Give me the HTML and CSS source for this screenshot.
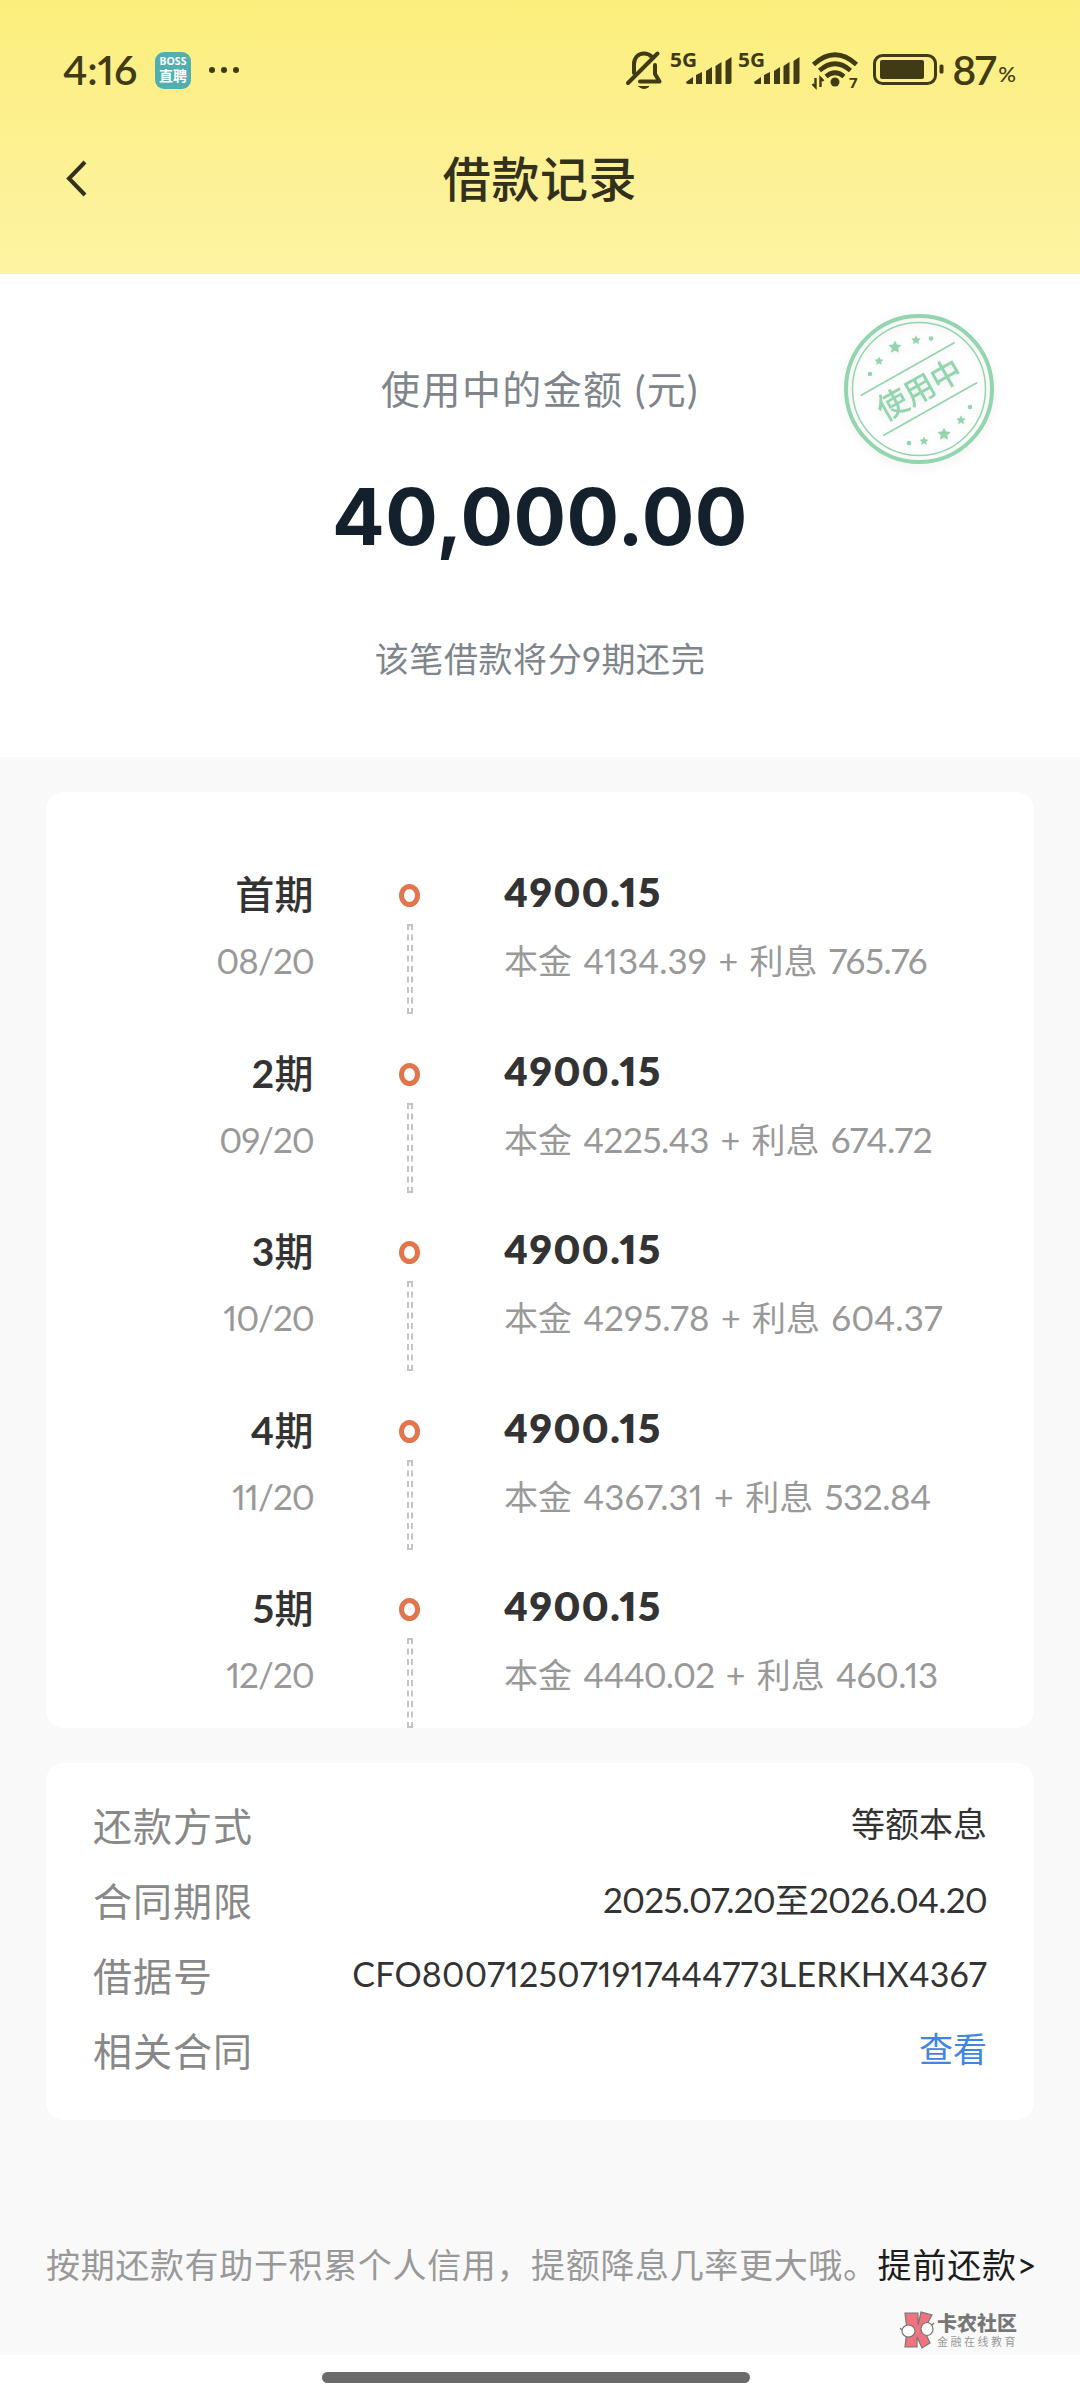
FILE: index.html
```html
<!DOCTYPE html>
<html lang="zh-CN">
<head>
<meta charset="utf-8">
<title>借款记录</title>
<link rel="stylesheet" href="styles.css">
</head>
<body>
<header class="top">
  <div class="status">
    <span class="clock">4:16</span>
    <span class="boss"><span class="boss-en">BOSS</span><span class="boss-cn">直聘</span></span>
    <svg class="more" width="32" height="8" viewBox="0 0 32 8"><circle cx="4" cy="4" r="3"/><circle cx="16" cy="4" r="3"/><circle cx="28" cy="4" r="3"/></svg>
    <div class="status-right">
      <svg class="bell" width="36" height="40" viewBox="0 0 36 40" stroke="#403b14" stroke-width="4" stroke-linecap="round" stroke-linejoin="round"><path d="M8 23V14C8 8 12 3.500 18 3.500c3 0 5.500 1 7.500 3M29 15v9l4.500 7.500H14M31.500 3.500L2 33" fill="none"/><path d="M13 36.500h10q-5 4-10 0z" stroke-width="1"/></svg>
      <svg class="sig" width="62" height="40" viewBox="0 0 62 40"><text x="0" y="17" textLength="27" lengthAdjust="spacingAndGlyphs">5G</text><path d="M16 32l7-5v7h-5q-2 0-2-2zM26 25l6-3v12h-6zM36 21l6-4v17h-6zM45.500 16l6-4v22h-6zM55.500 11l6-4v25q0 2-2 2h-4z"/></svg>
      <svg class="sig sig2" width="62" height="40" viewBox="0 0 62 40"><text x="0" y="17" textLength="27" lengthAdjust="spacingAndGlyphs">5G</text><path d="M16 32l7-5v7h-5q-2 0-2-2zM26 25l6-3v12h-6zM36 21l6-4v17h-6zM45.500 16l6-4v22h-6zM55.500 11l6-4v25q0 2-2 2h-4z"/></svg>
      <svg class="wifi" width="46" height="40" viewBox="0 0 46 40"><g stroke="#403b14" stroke-width="4.600"><path d="M1.500 14.500Q23-5 44.500 14.500M7.500 20.500Q23 7 38.500 20.500M14 26.500Q23 19 32 26.500"/><path d="M3.500 28v9l-3-3M8.500 37v-9l3 3" stroke-width="2.400"/></g><circle cx="23" cy="32" r="4.500"/><text x="37" y="38">7</text></svg>
      <svg class="bat" width="71" height="40" viewBox="0 0 71 40"><rect class="shell" x="1.500" y="5.500" width="61" height="28" rx="8" stroke="#403b14" stroke-width="3"/><rect x="7" y="10" width="44" height="19" rx="2"/><rect x="66.500" y="14.500" width="4" height="9" rx="1.500"/></svg>
      <span class="pct">87</span><span class="pct-sign">%</span>
    </div>
  </div>
  <div class="nav">
    <svg class="back" width="22" height="38" viewBox="0 0 22 38"><path d="M19 2L3 18.500L19 35" fill="none" stroke="#33301c" stroke-width="4"/></svg>
    <h1>借款记录</h1>
  </div>
</header>

<section class="summary">
  <p class="label">使用中的金额 (元)</p>
  <p class="total">40,000.00</p>
  <p class="note">该笔借款将分9期还完</p>
  <svg class="stamp" width="160" height="160" viewBox="-80 -80 160 160">
    <defs><path id="star" d="M0-6L1.800-2.200L6-1.800L2.900 1.100L3.700 5.200L0 3.100L-3.700 5.200L-2.900 1.100L-6-1.800L-1.800-2.200Z"/></defs>
    <g fill="none" stroke="#92d5ae"><circle r="73" stroke-width="4"/><circle r="66.500" stroke-width="1.500"/></g>
    <g transform="rotate(-29.500)" fill="#92d5ae">
      <path d="M-54-23H54M-54 23H54" stroke="#92d5ae" stroke-width="1.700"/>
      <text x="-46" y="12" textLength="92">使用中</text>
    </g>
    <g fill="#92d5ae">
      <circle cx="-49" cy="-15" r="2.300"/><use href="#star" transform="translate(-40 -28) scale(.75)"/><use href="#star" transform="translate(-24 -42) scale(1.1)"/><use href="#star" transform="translate(-3 -49) scale(.8)"/><circle cx="12" cy="-50.500" r="2.300"/>
      <circle cx="-10" cy="54" r="2.300"/><use href="#star" transform="translate(5 52) scale(.75)"/><use href="#star" transform="translate(25 45) scale(1.1)"/><use href="#star" transform="translate(42 31) scale(.8)"/><circle cx="51" cy="18" r="2.300"/>
    </g>
  </svg>
</section>

<main>
  <section class="card plan">
    <div class="term"><div class="when"><b>首期</b><span class="date">08/20</span></div><div class="rail"><i class="dot"></i><i class="dash"></i></div><div class="pay"><b>4900.15</b><span>本金 <em class="wide">4134.39</em> + 利息 <em>765.76</em></span></div></div>
    <div class="term"><div class="when"><b><strong>2</strong>期</b><span class="date">09/20</span></div><div class="rail"><i class="dot"></i><i class="dash"></i></div><div class="pay"><b>4900.15</b><span>本金 <em>4225.43</em> + 利息 <em>674.72</em></span></div></div>
    <div class="term"><div class="when"><b><strong>3</strong>期</b><span class="date">10/20</span></div><div class="rail"><i class="dot"></i><i class="dash"></i></div><div class="pay"><b>4900.15</b><span>本金 <em class="wide">4295.78</em> + 利息 <em class="wide">604.37</em></span></div></div>
    <div class="term"><div class="when"><b><strong>4</strong>期</b><span class="date">11/20</span></div><div class="rail"><i class="dot"></i><i class="dash"></i></div><div class="pay"><b>4900.15</b><span>本金 <em class="wide">4367.31</em> + 利息 <em>532.84</em></span></div></div>
    <div class="term"><div class="when"><b><strong>5</strong>期</b><span class="date">12/20</span></div><div class="rail"><i class="dot"></i><i class="dash"></i></div><div class="pay"><b>4900.15</b><span>本金 <em class="tight">4440.02</em> + 利息 <em>460.13</em></span></div></div>
  </section>

  <section class="card info">
    <div class="row"><span class="key">还款方式</span><span class="val">等额本息</span></div>
    <div class="row"><span class="key">合同期限</span><span class="val"><em>2025.07.20</em>至<em>2026.04.20</em></span></div>
    <div class="row"><span class="key">借据号</span><span class="val serial">CFO8007125071917444773LERKHX4367</span></div>
    <div class="row"><span class="key">相关合同</span><a class="val link">查看</a></div>
  </section>

  <p class="tip"><span>按期还款有助于积累个人信用，提额降息几率更大哦。</span><a>提前还款&gt;</a></p>

  <div class="mark">
    <svg width="34" height="38" viewBox="0 0 34 38"><g stroke="#777" stroke-width="1.200"><path d="M5 2h13v12l3-13 11 3-8 15 6 13-8 5-5-11v10H5l2-17z" fill="#ef7480"/><ellipse cx="8.500" cy="20" rx="6.500" ry="6" fill="#fff"/><ellipse cx="27" cy="18" rx="6" ry="6.500" fill="#fff"/><path d="M0 17l2 2M34 12l-2 2" fill="none"/></g></svg>
    <div class="mark-text"><b>卡农社区</b><span>金融在线教育</span></div>
  </div>
</main>
<footer><div class="home"></div></footer>
</body>
</html>
```
FILE: styles.css
```css
* { box-sizing: border-box; margin: 0; padding: 0; }
body { width: 1080px; height: 2400px; background: #fff; font-family: Lato, "Noto Sans CJK SC", sans-serif; font-feature-settings: "pnum"; color: #333; display: flex; flex-direction: column; overflow: hidden; white-space: nowrap; }
b, h1 { font-weight: 500; }
i, em { font-style: normal; }
svg { display: block; flex: none; overflow: visible; }

.top { height: 274px; background: linear-gradient(#fcee7d, #fdf3a3); color: #403b14; }
.status { display: flex; align-items: center; height: 140px; padding: 0 64px 0 63px; }
.status svg { fill: #403b14; }
.clock { font-size: 41px; font-weight: 600; width: 92px; padding-bottom: 2px; letter-spacing: -.2px; }
.boss { width: 36px; height: 37px; border-radius: 9px; background: #53aeaf; color: #fff; display: flex; flex-direction: column; align-items: center; justify-content: center; line-height: 1; }
.boss-en { font: 700 10.500px/11px "Noto Sans", sans-serif; }
.boss-cn { font-size: 14px; line-height: 17px; font-weight: 700; }
.more { margin-left: 17px; }
.status-right { display: flex; align-items: center; margin-left: auto; }
.sig { margin-left: 8px; }
.sig2 { margin-left: 6px; }
.sig text { font: 700 19px "Noto Sans", sans-serif; }
.wifi { margin-left: 12px; }
.wifi text { font: 700 15px "Noto Sans", sans-serif; }
.status .wifi g, .status .shell { fill: none; }
.bat { margin-left: 15px; }
.pct { font-size: 41px; font-weight: 600; margin-left: 8px; padding-bottom: 2px; letter-spacing: -1.500px; }
.pct-sign { font-size: 22px; font-weight: 500; padding-top: 6px; margin-left: 3px; }
.nav { position: relative; height: 80px; display: flex; align-items: center; justify-content: center; color: #33301c; }
.back { position: absolute; left: 66px; top: 20px; }
.nav h1 { font-size: 48px; line-height: 78px; padding-bottom: 2px; letter-spacing: .6px; }

.summary { position: relative; height: 483px; text-align: center; }
.label { padding-top: 85px; font-size: 39px; line-height: 60px; letter-spacing: 1.400px; color: #80858b; }
.total { margin-top: 52px; font: 700 78px/92px Inter, sans-serif; letter-spacing: .5px; color: #14202c; }
.note { margin-top: 73px; font-size: 34px; line-height: 46px; letter-spacing: .6px; color: #80858b; }
.stamp { position: absolute; left: 839px; top: 35px; filter: drop-shadow(0 3px 5px rgba(0, 0, 0, .08)); }
.stamp text { font-size: 31px; font-weight: 500; }

main { flex: 1; background: #f9f9f9; padding: 35px 46px 0; display: flex; flex-direction: column; }
.card { background: #fff; border-radius: 18px; flex: none; }
.plan { height: 936px; padding-top: 75px; overflow: hidden; }
.term { height: 178.500px; display: flex; }
.when { width: 268px; display: flex; flex-direction: column; align-items: flex-end; }
.when b { font-size: 39px; line-height: 54px; letter-spacing: .4px; }
.when strong { font-weight: 700; }
.date { font-size: 35px; line-height: 40px; margin-top: 19px; letter-spacing: -.9px; color: #999; }
.rail { width: 189px; padding: 17px 0 0; margin-left: 1px; display: flex; flex-direction: column; align-items: center; }
.dot { width: 21px; height: 23px; border: 5px solid #e2754c; border-radius: 50%; }
.dash { width: 6px; height: 90px; margin-top: 17px; border: 2px dashed #c4c4c4; }
.pay { display: flex; flex-direction: column; }
.pay b { font-size: 40px; line-height: 50px; font-weight: 800; letter-spacing: 1.500px; }
.pay span { font-size: 34px; line-height: 40px; margin-top: 23px; word-spacing: 2.600px; color: #999; }
em { font-size: 35px; letter-spacing: -.4px; }
em.wide { letter-spacing: .1px; }
em.tight, .val em { letter-spacing: -.75px; }

.info { height: 357px; margin-top: 35px; padding: 24px 47px 0; }
.row { display: flex; justify-content: space-between; align-items: center; height: 74.800px; }
.key { font-size: 39px; letter-spacing: 1px; color: #888; }
.val { font-size: 34px; line-height: 48px; color: #333; }
.serial { letter-spacing: .25px; }
.link { color: #4085e0; }
.tip { display: flex; justify-content: space-between; margin-top: 121px; font-size: 34px; line-height: 48px; color: #999; }
.tip span { letter-spacing: .65px; }
.tip a { color: #1c1c1c; letter-spacing: .8px; }
.mark { display: flex; align-self: flex-end; margin: 22px 13px 0 0; height: 38px; }
.mark-text { width: 84px; margin-left: 3px; display: flex; flex-direction: column; color: #777; }
.mark b { font-size: 20px; line-height: 24px; font-weight: 800; }
.mark span { font-size: 11px; line-height: 14px; letter-spacing: 2.500px; color: #999; }
footer { height: 45px; flex: none; background: #fff; display: flex; justify-content: center; padding: 17px 8px 0 0; }
.home { width: 428px; height: 11px; border-radius: 6px; background: #6a6a6a; }
```
